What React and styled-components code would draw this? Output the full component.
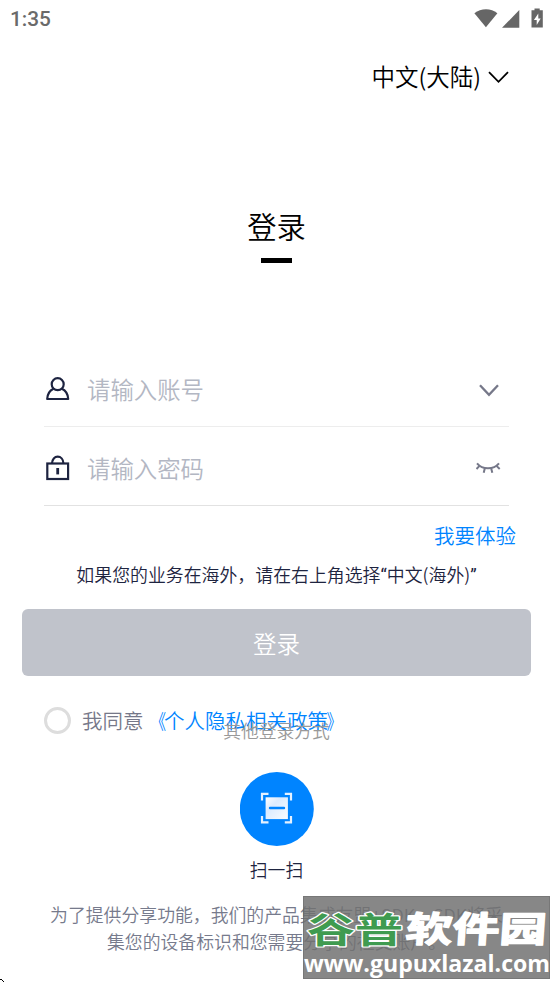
import React from 'react';
import styled, { createGlobalStyle } from 'styled-components';

const GlobalStyle = createGlobalStyle`
  * { box-sizing: border-box; }

  body {
    margin: 0;
    background: #fff;
    overflow: hidden;
    font-family: 'Noto Sans CJK SC', sans-serif;
    font-weight: 350;
  }
`;

const Screen = styled.div`
  position: relative;
  width: 553px;
  height: 983px;
  overflow: hidden;
  display: flex;
  flex-direction: column;
  background: #fff;
  color: #000;
`;

const StatusBar = styled.div`
  height: 38px;
  padding: 0 3px 0 10px;
  display: flex;
  align-items: center;
  justify-content: space-between;
  color: #6a6a6a;
  font-family: Roboto, sans-serif;
  font-size: 20.8px;
  font-weight: 500;

  svg { display: block; }
`;

const LanguagePicker = styled.div`
  height: 40px;
  margin-top: 20px;
  padding-right: 44px;
  display: flex;
  align-items: center;
  justify-content: flex-end;
  gap: 7px;
  font-size: 23.5px;
  line-height: 36px;

  span { padding-bottom: 4px; }

  svg { margin-top: -2px; }
`;

const Title = styled.h1`
  margin: 108px 0 0;
  height: 44px;
  text-align: center;
  font-size: 29.3px;
  font-weight: 350;
  line-height: 38px;
`;

const TitleBar = styled.div`
  width: 31px;
  height: 5px;
  margin: 8px auto 0;
  background: #000;
`;

const Form = styled.div`
  margin: 85px 44px 0;
`;

const Field = styled.div`
  height: 79px;
  padding: 4px 8px 0 1px;
  display: flex;
  align-items: center;
  border-bottom: 1px solid ${({ $line }) => $line};
  font-size: 23.4px;
  line-height: 28px;
  color: #b3b7c3;

  svg { display: block; }

  span {
    flex: 1;
    margin-left: 17px;
  }
`;

const ExpandButton = styled.div`
  padding: 3px 2px 0 0;
`;

const TrialLink = styled.a`
  height: 30px;
  margin: 15px 37px 0 0;
  align-self: flex-end;
  color: #0084ff;
  font-size: 20.5px;
  line-height: 28px;
`;

const Hint = styled.p`
  margin: 11px 0 0;
  height: 28px;
  text-align: center;
  color: #1e2440;
  font-size: 17.9px;
  line-height: 25px;
`;

const Quote = styled.span`
  font-family: Roboto, sans-serif;
  font-weight: 400;
`;

const LoginButton = styled.button`
  height: 67px;
  margin: 19px 22px 0;
  padding: 0;
  border: 0;
  border-radius: 6px;
  background: #c0c3cb;
  color: #fff;
  font: inherit;
  font-size: 23.5px;
  line-height: 28px;
`;

const Agreement = styled.label`
  height: 30px;
  margin: 30px 0 0 44px;
  display: flex;
  align-items: center;
  color: #767889;
  font-size: 20.5px;
  line-height: 30px;

  a { color: #0084ff; }
`;

const AgreementText = styled.span`
  padding-bottom: 2px;
`;

const Radio = styled.span`
  width: 27px;
  height: 27px;
  margin: -1px 11px 0 0;
  border: 3px solid #ddd;
  border-radius: 50%;
`;

// condensed book-title mark, hugging the policy name
const TitleMark = styled.span`
  display: inline-block;
  font-weight: 350;
  transform: translateX(${({ $shift }) => $shift}px) scaleX(0.76);
  transform-origin: ${({ $side }) => $side} center;
`;

const OtherTitle = styled.div`
  height: 26px;
  margin-top: -18px;
  text-align: center;
  color: #999;
  font-size: 17.8px;
  line-height: 24px;
`;

const ScanEntry = styled.div`
  margin-top: 28px;
  display: flex;
  flex-direction: column;
  align-items: center;
  color: #1e2440;
  font-size: 17.8px;
  line-height: 26px;

  svg {
    display: block;
    margin-bottom: 10px;
  }
`;

const Notice = styled.p`
  margin: 19px 0 0;
  text-align: center;
  color: #767a8c;
  font-size: 17.85px;
  line-height: 26.6px;
  white-space: nowrap;
`;

const Watermark = styled.div`
  position: absolute;
  left: 303px;
  top: 896px;
  width: 247px;
  height: 83px;
  background: rgba(112, 112, 112, 0.84);
  border: 1px solid rgba(90, 90, 90, 0.35);

  svg {
    display: block;
    margin: -1px;
    overflow: visible;
  }
`;

const CornerMark = styled.div`
  position: absolute;
  left: 0;
  bottom: 0;

  svg { display: block; }
`;

const StatusIcons = () => (
  <svg width="76" height="22" viewBox="0 0 76 22" fill="#666">
    <path d="M0.4 5.2C7 -0.2 17 -0.2 23.4 5.2L11.9 19.2Z" />
    <path d="M45.3 2V19.8H28Z" />
    <path fillRule="evenodd" d="M60.5 0.5H65.7V2.2H68.8V19.5H57.5V2.2H60.5ZM64.3 5.5L59.9 12H62.7V17L66.7 10.4H64.3Z" />
  </svg>
);

const UserIcon = () => (
  <svg width="25" height="26" viewBox="0 0 25 26" fill="none" stroke="#1d2340" strokeWidth="2.2" strokeLinejoin="round">
    <circle cx="12.7" cy="8.2" r="6" />
    <path d="M8.5 12.8C4.8 14.5 2.5 18 2.2 23H23.2C22.9 18 20.6 14.5 16.9 12.8" />
  </svg>
);

const LockIcon = () => (
  <svg width="25" height="26" viewBox="0 0 25 26" fill="none" stroke="#1d2340" strokeWidth="2.2">
    <rect x="2.3" y="8.5" width="20.8" height="15.5" />
    <path d="M7 8.5C7 -0.6 18.4 -0.6 18.4 8.5" />
    <path d="M12.7 13V19.4" strokeWidth="2.8" />
  </svg>
);

const Chevron = ({ width, height, color, stroke }) => (
  <svg width={width} height={height} viewBox={`0 0 ${width} ${height}`} fill="none" stroke={color} strokeWidth={stroke}>
    <path d={`M1 1.2L${width / 2} ${height - 2.2}L${width - 1} 1.2`} />
  </svg>
);

const ClosedEyeIcon = () => (
  <svg width="25" height="14" viewBox="0 0 25 14" fill="none" stroke="#767889" strokeWidth="2">
    <path d="M1 2.3C6.5 8.9 17.5 8.9 23 2.3" />
    <path d="M3.5 4.9L0.5 8M20.5 4.9L23.7 8M8.9 6.9L7.7 11.7M15.1 6.9L16.3 11.7" />
  </svg>
);

const ScanIcon = () => (
  <svg width="74" height="74" viewBox="0 0 74 74">
    <defs>
      <linearGradient id="scanPanel" x1="0" y1="0" x2="1" y2="1">
        <stop offset="0" stopColor="#fff" />
        <stop offset="0.35" stopColor="#dcebff" />
        <stop offset="1" stopColor="#fafcff" />
      </linearGradient>
    </defs>
    <circle cx="36.8" cy="37" r="37" fill="#0084ff" />
    <path d="M28.5 21.8H22V28.4M44.8 21.8H51V28.4M22 44V50.3H28.5M51 44V50.3H44.8" fill="none" stroke="#e5f1ff" strokeWidth="2.2" />
    <rect x="25.6" y="25.3" width="22.3" height="21.8" fill="url(#scanPanel)" />
    <path d="M30 36H44" stroke="#0084ff" strokeWidth="2.4" strokeLinecap="round" />
  </svg>
);

const SiteLogo = () => (
  <svg width="247" height="83" viewBox="0 0 247 83" fontFamily="'Noto Sans CJK SC', sans-serif">
    <g fontSize="35.5" fontWeight="700" strokeLinejoin="round" paintOrder="stroke">
      <text x="4" y="46.5" textLength="96" lengthAdjust="spacingAndGlyphs" fill="#3f9b50" stroke="#fff" strokeWidth="2.4">谷普</text>
      <text x="105" y="46.5" textLength="141" lengthAdjust="spacingAndGlyphs" fill="#fff" stroke="#fff" strokeWidth="1.4" transform="skewX(-4)">软件园</text>
    </g>
    <text
      x="1" y="76" fontSize="23" fontWeight="700" fontFamily="'Open Sans', sans-serif"
      fill="#fff" textLength="246" lengthAdjust="spacingAndGlyphs"
    >
      www.gupuxlazal.com
    </text>
  </svg>
);

const App = () => {
  return (
    <>
      <GlobalStyle />
      <Screen>
        <StatusBar>
          <span>1:35</span>
          <StatusIcons />
        </StatusBar>

        <LanguagePicker>
          <span>中文(大陆)</span>
          <Chevron width={21} height={13} color="#000" stroke={1.8} />
        </LanguagePicker>

        <Title>登录</Title>
        <TitleBar />

        <Form>
          <Field $line="#ededed">
            <UserIcon />
            <span>请输入账号</span>
            <ExpandButton>
              <Chevron width={20} height={13} color="#767889" stroke={2.3} />
            </ExpandButton>
          </Field>
          <Field $line="#e2e2e2">
            <LockIcon />
            <span>请输入密码</span>
            <ClosedEyeIcon />
          </Field>
        </Form>

        <TrialLink>我要体验</TrialLink>
        <Hint>
          如果您的业务在海外，请在右上角选择<Quote>“</Quote>中文(海外)<Quote>”</Quote>
        </Hint>
        <LoginButton>登录</LoginButton>

        <Agreement>
          <Radio />
          <AgreementText>
            我同意
            <a>
              <TitleMark $side="right" $shift={1.5}>《</TitleMark>
              个人隐私相关政策
              <TitleMark $side="left" $shift={-1.5}>》</TitleMark>
            </a>
          </AgreementText>
        </Agreement>
        <OtherTitle>其他登录方式</OtherTitle>

        <ScanEntry>
          <ScanIcon />
          <span>扫一扫</span>
        </ScanEntry>

        <Notice>
          为了提供分享功能，我们的产品集成友盟+SDK，SDK将采
          <br />
          集您的设备标识和您需要分享的社交账户。
        </Notice>

        <Watermark>
          <SiteLogo />
        </Watermark>
        <CornerMark>
          <svg width="5" height="5" viewBox="0 0 5 5">
            <path d="M0 1.5H1M1 1.5H2M2 2.5H3M3 3.5H4" stroke="#000" />
          </svg>
        </CornerMark>
      </Screen>
    </>
  );
};

export default App;
